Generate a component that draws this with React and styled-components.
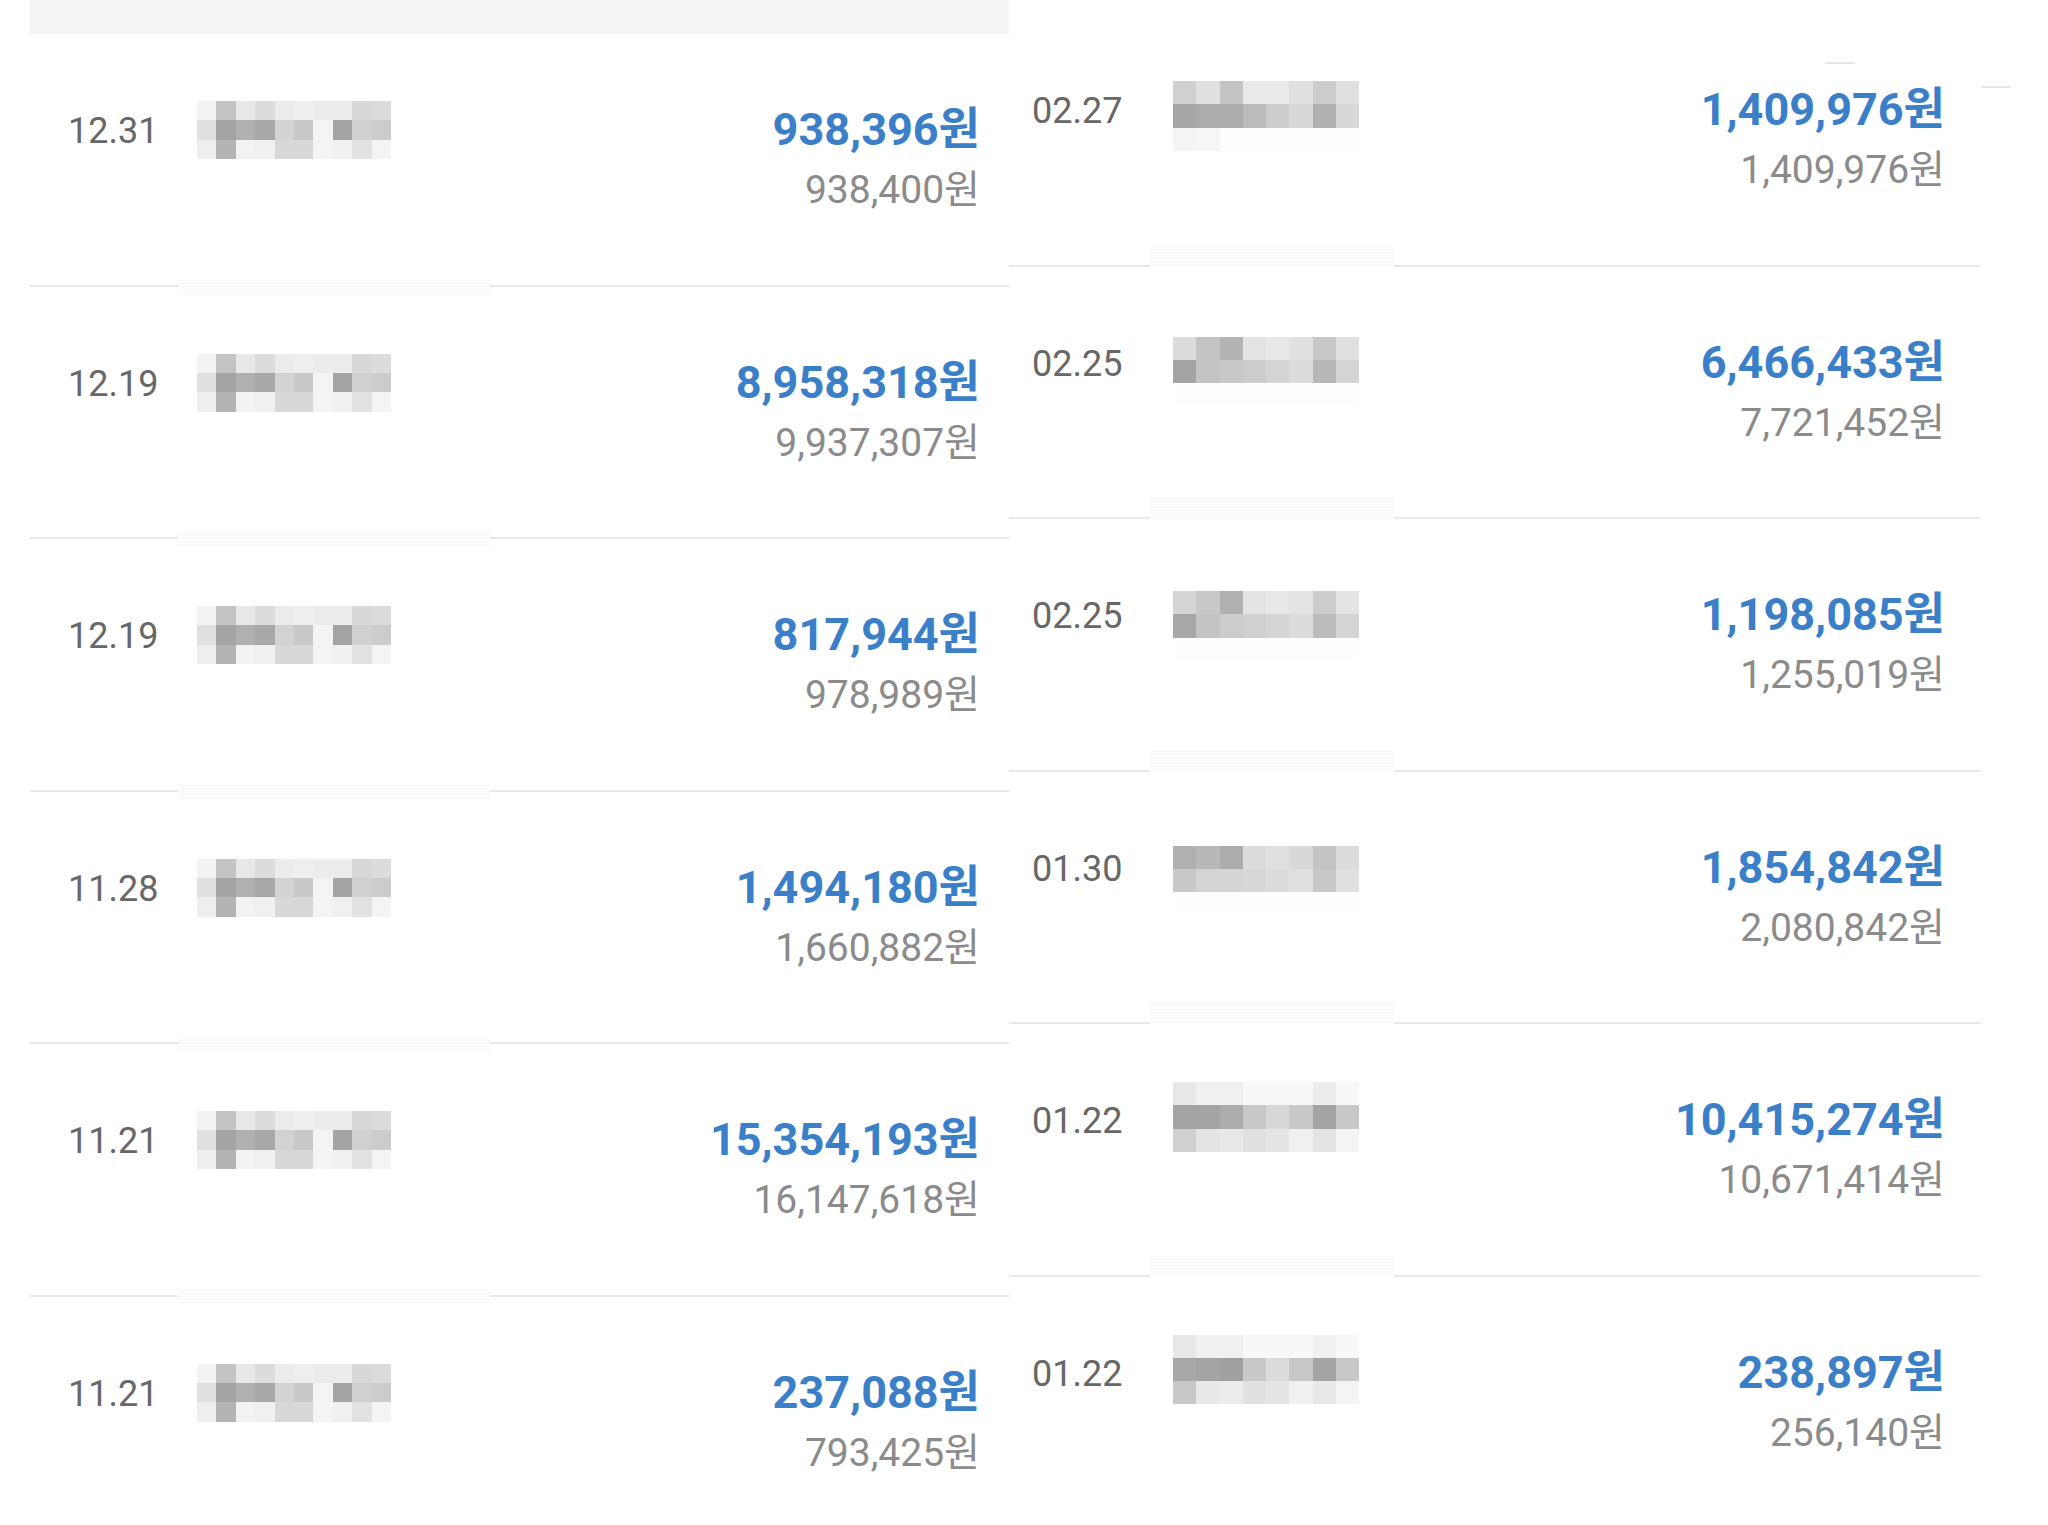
import React from "react";
import styled, { createGlobalStyle } from "styled-components";

const Global = createGlobalStyle`
  html, body { margin: 0; padding: 0; background: #ffffff; }
  body { width: 2048px; height: 1525px; overflow: hidden; }
  * { box-sizing: border-box; }
`;

const FONT = `Roboto, "Noto Sans CJK KR", "Noto Sans", sans-serif`;

const Page = styled.main`
  position: relative;
  display: flex;
  align-items: flex-start;
  width: 2048px;
  height: 1525px;
  padding-left: 30px;
  overflow: hidden;
  background: #ffffff;
  font-family: ${FONT};
`;

const Panel = styled.section`
  flex: 0 0 ${(p) => p.$width}px;
  display: flex;
  flex-direction: column;
  padding-top: ${(p) => p.$top}px;
`;

const TopBar = styled.div`
  height: 34px;
  background: #f5f5f5;
`;

const Entry = styled.article`
  display: flex;
  flex-direction: column;
`;

const RowBody = styled.div`
  height: 250.5px;
  display: grid;
  grid-template-columns: ${(p) => p.$dateCol}px auto 1fr;
  align-items: start;
  padding: 0 ${(p) => p.$padRight}px 0 ${(p) => p.$padLeft}px;
`;

const DateText = styled.div`
  padding-top: 77px;
  font-size: 36px;
  line-height: 40px;
  color: #676767;
`;

const Mosaic = styled.div`
  margin-top: ${(p) => p.$offset}px;
  display: grid;
  grid-template-columns: repeat(${(p) => p.$cols}, ${(p) => p.$cw}px);
  grid-auto-rows: ${(p) => p.$ch}px;
`;

const Cell = styled.span`
  display: block;
  background: rgb(${(p) => p.$g}, ${(p) => p.$g}, ${(p) => p.$g});
`;

const Amounts = styled.div`
  padding-top: 70px;
  display: flex;
  flex-direction: column;
  align-items: flex-end;
`;

const Paid = styled.div`
  font-size: 45px;
  line-height: 52px;
  font-weight: 700;
  color: #3a7fc8;
  white-space: nowrap;
`;

const Original = styled.div`
  margin-top: 12px;
  font-size: 39px;
  line-height: 44px;
  font-weight: 400;
  color: #8b8b8b;
  white-space: nowrap;
`;

const Divider = styled.div`
  display: flex;
  align-items: flex-start;
  height: 2px;
`;

const Rule = styled.div`
  flex: ${(p) => (p.$w ? `0 0 ${p.$w}px` : "1 1 auto")};
  height: 2px;
  background: #e8e8e8;
`;

const Band = styled.div`
  flex: 0 0 ${(p) => p.$w}px;
  height: ${(p) => p.$h}px;
  margin-top: ${(p) => p.$dy}px;
  background: repeating-linear-gradient(
    0deg,
    #fdfdfd 0px,
    #fdfdfd 2px,
    #f8f8f8 2px,
    #f8f8f8 3px
  );
`;

const Speck = styled.span`
  position: absolute;
  left: ${(p) => p.$x}px;
  top: ${(p) => p.$y}px;
  width: 30px;
  height: 2px;
  background: #e6e6e6;
`;

const LEFT_GRID = [
  [243, 196, 232, 220, 236, 238, 236, 236, 216, 220],
  [224, 164, 176, 168, 210, 200, 244, 164, 208, 204],
  [238, 180, 242, 240, 216, 216, 244, 240, 226, 244],
];

const leftRows = [
  { date: "12.31", paid: "938,396원", orig: "938,400원" },
  { date: "12.19", paid: "8,958,318원", orig: "9,937,307원" },
  { date: "12.19", paid: "817,944원", orig: "978,989원" },
  { date: "11.28", paid: "1,494,180원", orig: "1,660,882원" },
  { date: "11.21", paid: "15,354,193원", orig: "16,147,618원" },
  { date: "11.21", paid: "237,088원", orig: "793,425원" },
];

const W = 254;
const rightRows = [
  {
    date: "02.27",
    paid: "1,409,976원",
    orig: "1,409,976원",
    offset: 67,
    grid: [
      [208, 224, 196, 234, 234, 224, 204, 224],
      [166, 172, 172, 188, 204, 216, 176, 216],
      [244, 246, W, W, W, W, W, W],
    ],
  },
  {
    date: "02.25",
    paid: "6,466,433원",
    orig: "7,721,452원",
    offset: 70,
    grid: [
      [220, 196, 180, 228, 232, 224, 200, 224],
      [164, 196, 200, 204, 212, 220, 184, 212],
      [W, W, W, W, W, W, W, W],
    ],
  },
  {
    date: "02.25",
    paid: "1,198,085원",
    orig: "1,255,019원",
    offset: 72,
    grid: [
      [212, 200, 176, 228, 232, 228, 204, 228],
      [168, 196, 204, 208, 212, 220, 188, 212],
      [W, W, W, W, W, W, W, W],
    ],
  },
  {
    date: "01.30",
    paid: "1,854,842원",
    orig: "2,080,842원",
    offset: 74,
    grid: [
      [176, 184, 172, 220, 224, 216, 196, 220],
      [200, 212, 212, 216, 220, 224, 200, 224],
      [W, W, W, W, W, W, W, W],
    ],
  },
  {
    date: "01.22",
    paid: "10,415,274원",
    orig: "10,671,414원",
    offset: 58,
    grid: [
      [232, 240, 240, 248, 248, 248, 236, 248],
      [164, 164, 172, 200, 216, 200, 164, 200],
      [208, 228, 232, 224, 228, 240, 228, 244],
    ],
  },
  {
    date: "01.22",
    paid: "238,897원",
    orig: "256,140원",
    offset: 58,
    grid: [
      [232, 240, 240, 248, 248, 248, 240, 248],
      [168, 164, 160, 200, 220, 200, 164, 200],
      [200, 232, 236, 224, 228, 240, 232, 244],
    ],
  },
];

function MosaicBlock({ grid, cw, ch, offset }) {
  return (
    <Mosaic $cols={grid[0].length} $cw={cw} $ch={ch} $offset={offset}>
      {grid.flat().map((g, i) => (
        <Cell key={i} $g={g} />
      ))}
    </Mosaic>
  );
}

function TxRow({ data, side, last }) {
  const isLeft = side === "left";
  return (
    <Entry>
      <RowBody
        $dateCol={isLeft ? 129 : 141}
        $padLeft={isLeft ? 38 : 23}
        $padRight={isLeft ? 29 : 36}
      >
        <DateText>{data.date}</DateText>
        {isLeft ? (
          <MosaicBlock grid={LEFT_GRID} cw={19.4} ch={19.4} offset={67} />
        ) : (
          <MosaicBlock grid={data.grid} cw={23.25} ch={23.3} offset={data.offset} />
        )}
        <Amounts>
          <Paid>{data.paid}</Paid>
          <Original>{data.orig}</Original>
        </Amounts>
      </RowBody>
      {last ? null : isLeft ? (
        <Divider>
          <Rule $w={148} />
          <Band $w={312} $h={17} $dy={-7} />
          <Rule />
        </Divider>
      ) : (
        <Divider>
          <Rule $w={141} />
          <Band $w={244} $h={21} $dy={-19} />
          <Rule />
        </Divider>
      )}
    </Entry>
  );
}

export default function App() {
  return (
    <>
      <Global />
      <Page>
        <Panel $width={979} $top={0}>
          <TopBar />
          {leftRows.map((r, i) => (
            <TxRow key={i} data={r} side="left" />
          ))}
        </Panel>
        <Panel $width={972} $top={14}>
          {rightRows.map((r, i) => (
            <TxRow
              key={i}
              data={r}
              side="right"
              last={i === rightRows.length - 1}
            />
          ))}
        </Panel>
        <Speck $x={1825} $y={62} />
        <Speck $x={1981} $y={86} />
      </Page>
    </>
  );
}
